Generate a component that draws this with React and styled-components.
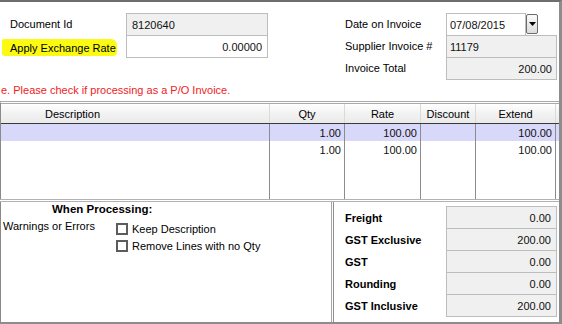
import { createGlobalStyle } from "styled-components";
import styled from "styled-components";

const GlobalStyle = createGlobalStyle`
  body {
    margin: 0;
    background: #fff;
    font-family: "Liberation Sans", Arial, sans-serif;
    font-size: 11px;
    color: #000;
  }
`;

const lines = [
  { qty: "1.00", rate: "100.00", discount: "", extend: "100.00", selected: true },
  { qty: "1.00", rate: "100.00", discount: "", extend: "100.00" },
];

const totals = [
  { label: "Freight", value: "0.00" },
  { label: "GST Exclusive", value: "200.00" },
  { label: "GST", value: "0.00" },
  { label: "Rounding", value: "0.00" },
  { label: "GST Inclusive", value: "200.00" },
];

const columns = [
  { key: "description", title: "Description", width: 270 },
  { key: "qty", title: "Qty", width: 75 },
  { key: "rate", title: "Rate", width: 76 },
  { key: "discount", title: "Discount", width: 55 },
  { key: "extend", title: "Extend", width: 80 },
];

export default function App() {
  return (
    <>
      <GlobalStyle />
      <Frame>
        <TopForm>
          <FieldsRow>
            <LeftFields>
              <Label $indent={8}>Document Id</Label>
              <ValueBox $readonly>8120640</ValueBox>
              <Label $indent={8}>
                <Highlight>Apply Exchange Rate</Highlight>
              </Label>
              <ValueBox $align="right">0.00000</ValueBox>
            </LeftFields>
            <RightFields>
              <Label>Date on Invoice</Label>
              <DateField>
                <DateBox>07/08/2015</DateBox>
                <DropButton>
                  <svg width="7" height="4" viewBox="0 0 7 4">
                    <path d="M0 0h7L3.5 4z" fill="#000" />
                  </svg>
                </DropButton>
              </DateField>
              <Label>Supplier Invoice #</Label>
              <ValueBox $readonly $pad={3}>11179</ValueBox>
              <Label>Invoice Total</Label>
              <ValueBox $readonly $align="right" $pad={4}>200.00</ValueBox>
            </RightFields>
          </FieldsRow>
          <Message>e. Please check if processing as a P/O Invoice.</Message>
        </TopForm>

        <LinesGrid>
          <HeaderRow>
            {columns.map((c) => (
              <HeaderCell key={c.key} $width={c.width} $left={c.key === "description"}>
                {c.title}
              </HeaderCell>
            ))}
            <Filler />
          </HeaderRow>
          <GridBody>
            {lines.map((line, i) => (
              <DataRow key={i} $selected={line.selected}>
                {columns.map((c) => (
                  <DataCell key={c.key} $width={c.width}>
                    {line[c.key]}
                  </DataCell>
                ))}
                <Filler />
              </DataRow>
            ))}
            <DataRow $grow>
              {columns.map((c) => (
                <DataCell key={c.key} $width={c.width} />
              ))}
              <Filler />
            </DataRow>
          </GridBody>
        </LinesGrid>

        <BottomSection>
          <OptionsPanel>
            <OptionsTitle>When Processing:</OptionsTitle>
            <OptionsBody>
              <WarnLabel>Warnings or Errors</WarnLabel>
              <CheckList>
                <CheckRow>
                  <CheckBox />
                  Keep Description
                </CheckRow>
                <CheckRow>
                  <CheckBox />
                  Remove Lines with no Qty
                </CheckRow>
              </CheckList>
            </OptionsBody>
          </OptionsPanel>
          <TotalsPanel>
            {totals.map((t) => (
              <TotalRow key={t.label}>
                <TotalLabel>{t.label}</TotalLabel>
                <ValueBox $readonly $align="right" $pad={5}>
                  {t.value}
                </ValueBox>
              </TotalRow>
            ))}
          </TotalsPanel>
        </BottomSection>
      </Frame>
    </>
  );
}

const Frame = styled.div`
  width: 562px;
  height: 324px;
  box-sizing: border-box;
  border-top: 2px solid #6e6e6e;
  border-right: 3px solid #8c8c8c;
  border-bottom: 2px solid #8c8c8c;
  display: flex;
  flex-direction: column;
  overflow: hidden;
`;

const TopForm = styled.div`
  height: 99px;
  box-sizing: border-box;
  padding-top: 11px;
`;

const FieldsRow = styled.div`
  display: flex;
`;

const LeftFields = styled.div`
  display: grid;
  grid-template-columns: 124px 142px;
  grid-auto-rows: 22px;
  padding-left: 2px;
`;

const RightFields = styled.div`
  display: grid;
  grid-template-columns: 101px 111px;
  grid-auto-rows: 22px;
  margin-left: 77px;
`;

const Label = styled.div`
  display: flex;
  align-items: center;
  padding-left: ${(p) => p.$indent ?? 0}px;
  white-space: nowrap;
`;

const Highlight = styled.span`
  display: inline-block;
  margin-top: 3px;
  padding: 3px 1px 2px 8px;
  margin-left: -8px;
  background: #fafa12;
  border-radius: 2px 6px 4px 3px;
`;

const ValueBox = styled.div`
  height: 23px;
  box-sizing: border-box;
  border: 1px solid #bdbdbd;
  background: ${(p) => (p.$readonly ? "#f0f0f0" : "#fff")};
  display: flex;
  align-items: center;
  justify-content: ${(p) => (p.$align === "right" ? "flex-end" : "flex-start")};
  padding: 0 ${(p) => p.$pad ?? 5}px;
  color: #111;
  position: relative;
`;

const DateField = styled.div`
  display: flex;
  align-items: flex-start;
`;

const DateBox = styled.div`
  width: 80px;
  height: 23px;
  box-sizing: border-box;
  border: 1px solid #bdbdbd;
  background: #fff;
  display: flex;
  align-items: center;
  padding-left: 3px;
  color: #111;
`;

const DropButton = styled.div`
  width: 12px;
  height: 20px;
  margin-top: 1px;
  box-sizing: border-box;
  border: 1px solid #6b6b6b;
  border-radius: 2px;
  background: linear-gradient(#fafafa, #dcdcdc);
  display: flex;
  align-items: center;
  justify-content: center;
`;

const Message = styled.div`
  margin-top: 5px;
  line-height: 13px;
  color: #ee1c1c;
  padding-left: 1px;
  white-space: nowrap;
`;

const LinesGrid = styled.div`
  border-top: 3px double #a9a9a9;
  border-left: 1px solid #8a8a8a;
  display: flex;
  flex-direction: column;
`;

const HeaderRow = styled.div`
  display: flex;
  height: 20px;
  box-sizing: border-box;
  border-bottom: 1px solid #3a3a3a;
  background: linear-gradient(#ffffff, #f1f1f1 55%, #ebebeb);
`;

const HeaderCell = styled.div`
  width: ${(p) => p.$width - (p.$left ? 1 : 0)}px;
  box-sizing: border-box;
  border-right: 1px solid #dadada;
  display: flex;
  align-items: center;
  justify-content: ${(p) => (p.$left ? "flex-start" : "center")};
  padding-left: ${(p) => (p.$left ? "44px" : "0")};
`;

const Filler = styled.div`
  flex: 1;
`;

const GridBody = styled.div`
  height: 75px;
  display: flex;
  flex-direction: column;
`;

const DataRow = styled.div`
  display: flex;
  height: ${(p) => (p.$grow ? "auto" : "17px")};
  flex: ${(p) => (p.$grow ? 1 : "none")};
  background: ${(p) => (p.$selected ? "#d8d8fb" : "transparent")};
`;

const DataCell = styled.div`
  width: ${(p) => p.$width}px;
  box-sizing: border-box;
  border-right: 1px solid #8c8c8c;
  display: flex;
  align-items: center;
  justify-content: flex-end;
  padding-right: 3px;
  color: #111;

  &:first-child {
    width: ${(p) => p.$width - 1}px;
  }
`;

const BottomSection = styled.div`
  flex: 1;
  display: flex;
  border-top: 3px double #b2b2b2;
`;

const OptionsPanel = styled.div`
  width: 332px;
  box-sizing: border-box;
  border-left: 1px solid #8a8a8a;
  border-right: 1px solid #a5a5a5;
  padding-top: 1px;
`;

const OptionsTitle = styled.div`
  font-weight: bold;
  line-height: 13px;
  padding-left: 51px;
  font-size: 11.5px;
`;

const OptionsBody = styled.div`
  display: flex;
  margin-top: 4px;
`;

const WarnLabel = styled.div`
  width: 115px;
  padding-left: 2px;
  box-sizing: border-box;
  line-height: 13px;
`;

const CheckList = styled.div`
  display: flex;
  flex-direction: column;
  gap: 3px;
  padding-top: 2px;
`;

const CheckRow = styled.label`
  display: flex;
  align-items: center;
  gap: 4px;
  height: 14px;
  white-space: nowrap;
`;

const CheckBox = styled.span`
  width: 12px;
  height: 12px;
  box-sizing: border-box;
  border: 2px solid #5c5c5c;
  background: #fff;
`;

const TotalsPanel = styled.div`
  flex: 1;
  margin-left: 1px;
  border-left: 1px solid #8f8f8f;
  padding: 4px 0 0 11px;
  display: grid;
  grid-auto-rows: 22px;
  align-content: start;
`;

const TotalRow = styled.div`
  display: grid;
  grid-template-columns: 101px 111px;
`;

const TotalLabel = styled.div`
  font-weight: bold;
  display: flex;
  align-items: center;
`;
